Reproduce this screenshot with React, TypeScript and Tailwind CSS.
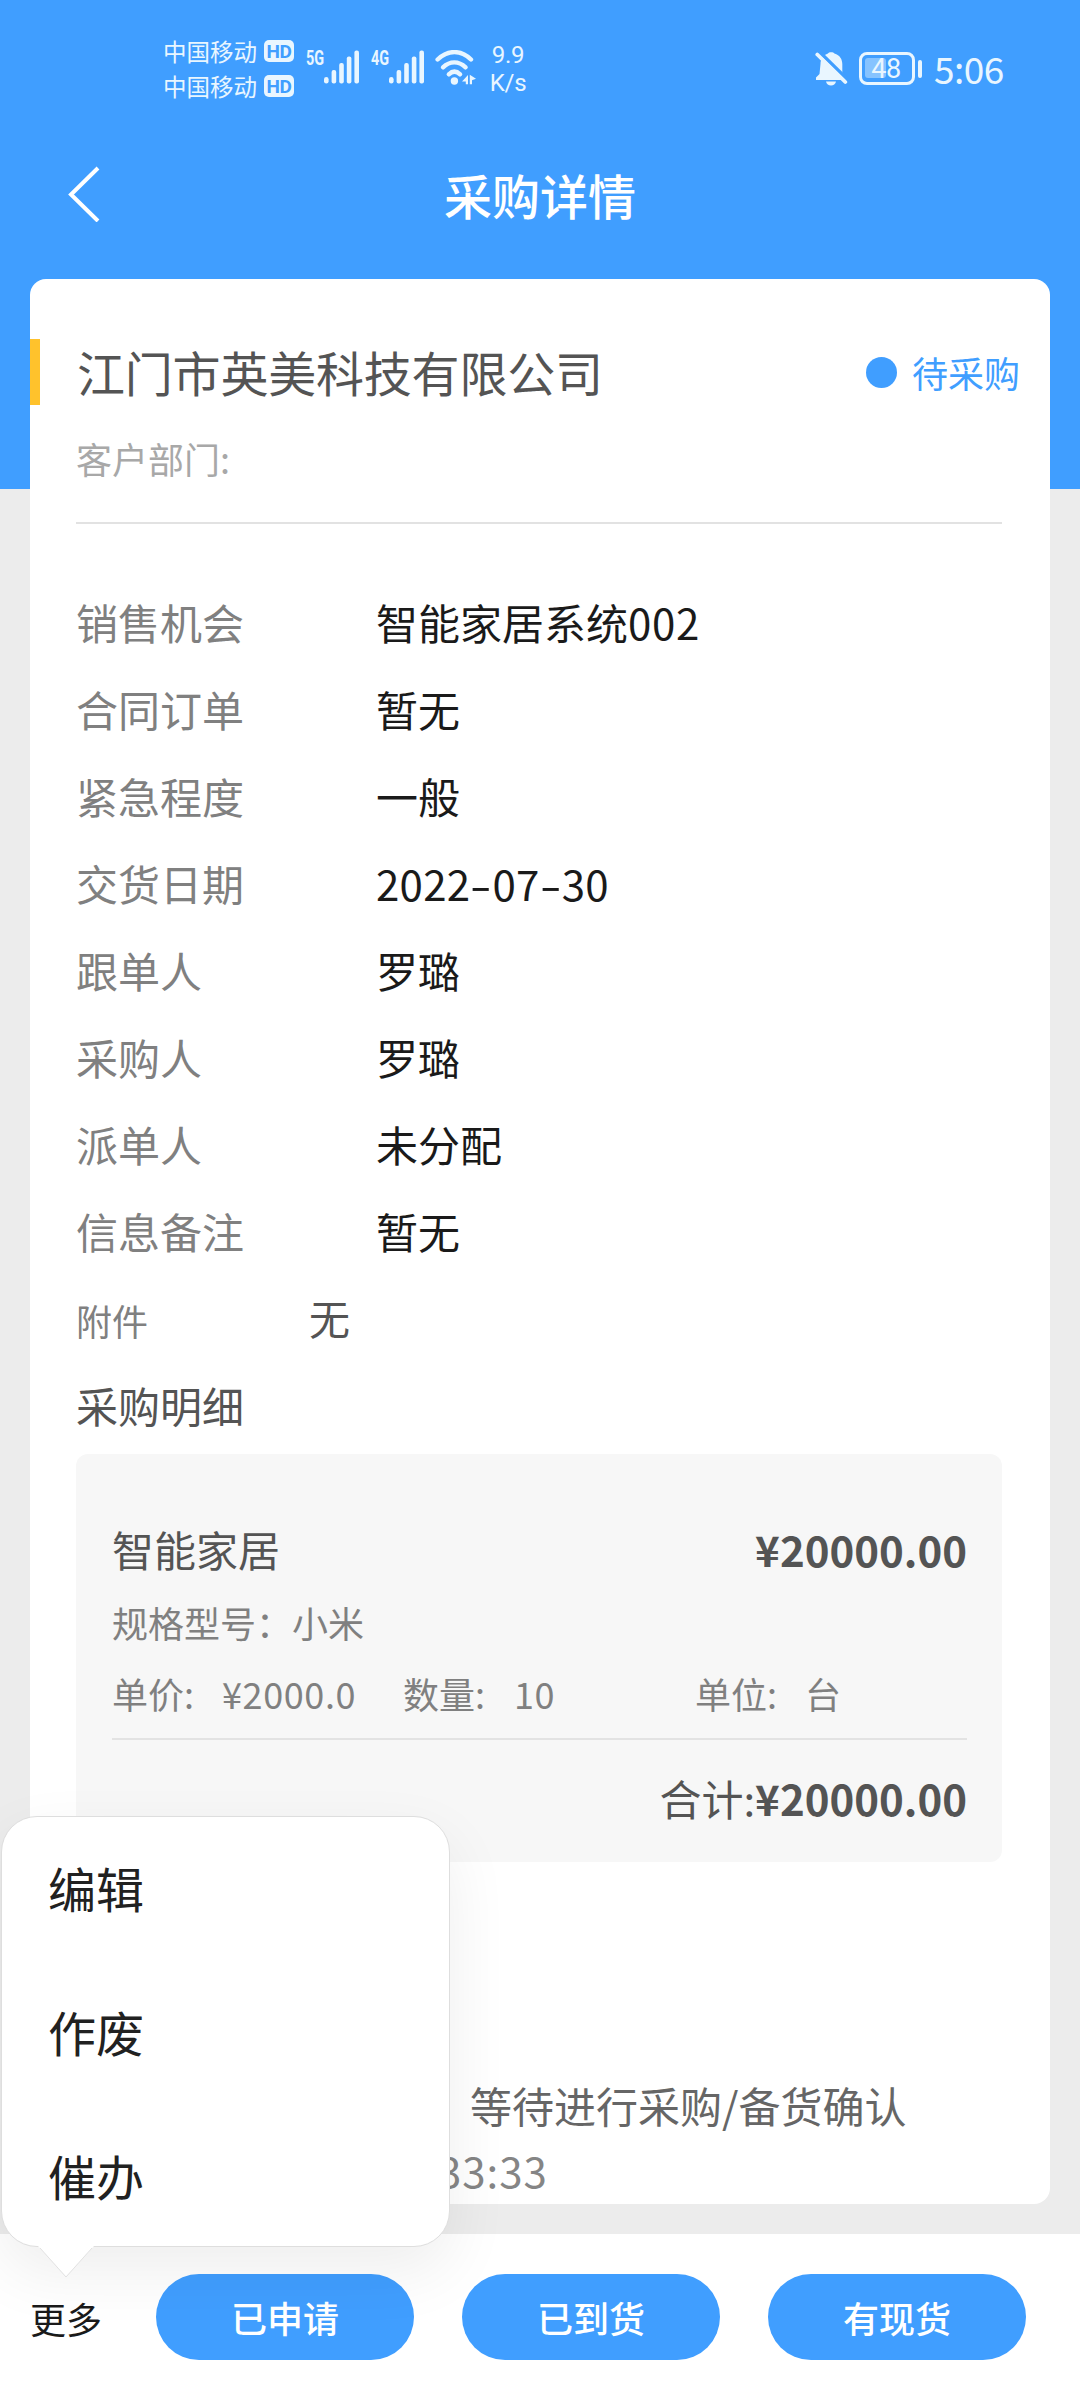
import React from "react";

const fields: { label: string; value: React.ReactNode }[] = [
  { label: "销售机会", value: <>智能家居系统<span className="tracking-[0.7px]">002</span></> },
  { label: "合同订单", value: "暂无" },
  { label: "紧急程度", value: "一般" },
  { label: "交货日期", value: <DateValue parts={["2022", "07", "30"]} /> },
  { label: "跟单人", value: "罗璐" },
  { label: "采购人", value: "罗璐" },
  { label: "派单人", value: "未分配" },
  { label: "信息备注", value: "暂无" },
];

function DateValue({ parts }: { parts: string[] }) {
  return (
    <span className="tracking-[0.3px]">
      {parts.map((part, i) => (
        <React.Fragment key={i}>
          {i > 0 && <span className="inline-block w-[22px] scale-x-[1.5] text-center">-</span>}
          {part}
        </React.Fragment>
      ))}
    </span>
  );
}

function Carrier() {
  return (
    <div className="flex h-[35px] items-center">
      <span className="w-[101px] text-[23.5px] leading-[35px]">中国移动</span>
      <span className="mt-[-1px] flex h-[22px] w-[30px] items-center justify-center rounded-[5px] bg-[#e9f6ff] font-['Roboto'] text-[19px] leading-none font-bold tracking-[-0.5px] text-[#409eff]">
        HD
      </span>
    </div>
  );
}

function Signal({ label }: { label: string }) {
  return (
    <div className="flex h-[34px] w-[54px]">
      <span className="h-[16px] w-[18px] origin-left scale-x-[0.72] font-['Roboto'] text-[20px] leading-[16px] font-bold whitespace-nowrap">
        {label}
      </span>
      <svg width="36" height="34" viewBox="0 0 36 34" fill="currentColor">
        <rect x="0" y="27" width="4.6" height="6.5" rx="2.3" />
        <rect x="7.6" y="20" width="4.6" height="13.5" rx="2" />
        <rect x="15.2" y="13" width="4.6" height="20.5" rx="2" />
        <rect x="22.8" y="6.5" width="4.6" height="27" rx="2" />
        <rect x="30.4" y="0.5" width="4.6" height="33" rx="2" />
      </svg>
    </div>
  );
}

function Wifi() {
  return (
    <svg width="42" height="36" viewBox="0 0 42 36" fill="none" stroke="currentColor" strokeWidth="4.4" strokeLinecap="round">
      <path d="M2.6 9.5C13 -.4 26 -.4 36 9.500" />
      <path d="M8 17.300c7-6.600 15.600-6.600 22.600 0" />
      <path d="M13.800 24.300c3.700-3.500 7.600-3.500 11.300 0" />
      <circle cx="19.400" cy="31" r="3.700" fill="currentColor" stroke="none" />
      <path d="M27 31.500l6-6.500v9.200h-2.200v-2.700zM34.800 24.800l6.200 4-4 1.500v4h-2.200z" fill="currentColor" stroke="none" />
    </svg>
  );
}

function MutedBell() {
  return (
    <svg width="33" height="36" viewBox="0 0 33 36">
      <path
        d="M5.500 13c0-5 3-9 7.500-10.500C13.600.8 18.600.8 19.400 2.500 25 4 27.300 8.500 27.300 13v8.500L31 26.500V29H1v-2.500l3.500-3.500z"
        fill="#e9f6ff"
      />
      <path d="M11 30.500h10c-.6 2.600-2.500 4-5 4s-4.400-1.400-5-4z" fill="#e9f6ff" />
      <path d="M3.500 0l29 28.500" stroke="#409eff" strokeWidth="3.500" />
      <path d="M2.300 3.500l28 27.500" stroke="#e9f6ff" strokeWidth="3.800" strokeLinecap="round" />
    </svg>
  );
}

function StatusBar() {
  return (
    <div className="flex h-[120px] items-start text-[#e9f6ff]">
      <div className="mt-[34px] ml-[163px] w-[131px]">
        <Carrier />
        <Carrier />
      </div>
      <div className="mt-[50px] ml-[12px] flex">
        <Signal label="5G" />
        <div className="ml-[11px]">
          <Signal label="4G" />
        </div>
        <div className="ml-[10px]">
          <Wifi />
        </div>
      </div>
      <div className="mt-[41px] ml-[10px] w-[42px] text-center font-['Roboto'] text-[24px] leading-[28px] tracking-[-0.3px]">
        <div>9.9</div>
        <div>K/s</div>
      </div>
      <div className="mt-[51px] ml-[286px]">
        <MutedBell />
      </div>
      <div className="mt-[52px] ml-[11px] flex items-center">
        <div className="relative flex h-[33px] w-[56px] items-center justify-center rounded-[8px] border-[3.5px] border-[#e9f6ff]">
          <div className="absolute top-[3px] left-[3px] h-[20px] w-[21px] rounded-[3px] bg-[#86c3ff]" />
          <span className="relative mt-[2px] mr-[2px] font-['Roboto'] text-[27px] leading-none tracking-[-0.5px]">48</span>
        </div>
        <div className="ml-[3px] h-[18px] w-[4px] rounded-full bg-[#e9f6ff]" />
      </div>
      <div className="mt-[50px] ml-[12px] font-['Noto_Sans_CJK_SC',sans-serif] text-[37px] leading-[36px] tracking-[-0.5px]">5:06</div>
    </div>
  );
}

function NavBar() {
  return (
    <div className="mb-[11px] grid h-[148px] grid-cols-[120px_1fr_120px] items-center text-white">
      <svg className="ml-[67px]" width="34" height="56" viewBox="0 0 34 56" fill="none" stroke="currentColor" strokeWidth="4">
        <path d="M31 2L4 28.500l27 26.500" />
      </svg>
      <h1 className="pb-[1px] text-center text-[48px] leading-[60px] font-medium">采购详情</h1>
    </div>
  );
}

function PurchaseItem() {
  return (
    <div className="mr-[48px] ml-[46px] mt-[8px] h-[408px] rounded-[12px] bg-[#f7f7f7] pr-[35px] pl-[36px] pt-[65px] text-[#545454]">
      <div className="flex h-[60px] items-center justify-between text-[42px] leading-[60px]">
        <span>智能家居</span>
        <span className="font-bold">¥20000.00</span>
      </div>
      <div className="mt-[18px] h-[50px] text-[36px] leading-[50px] text-[#808080]">规格型号：小米</div>
      <div className="mt-[21px] flex h-[50px] text-[36px] leading-[50px] text-[#808080]">
        <span className="w-[110px]">单价:</span>
        <span className="w-[181px] tracking-[0.6px]">¥2000.0</span>
        <span className="w-[111px]">数量:</span>
        <span className="w-[181px] tracking-[0.6px]">10</span>
        <span className="w-[110px]">单位:</span>
        <span>台</span>
      </div>
      <div className="mt-[20px] h-[2px] bg-[#e3e3e3]" />
      <div className="mt-[28px] text-right text-[42px] leading-[60px]">
        合计:<span className="font-bold">¥20000.00</span>
      </div>
    </div>
  );
}

function DetailCard() {
  return (
    <main className="mx-[30px] h-[1925px] shrink-0 rounded-[16px] bg-white pt-[60px]">
      <div className="flex h-[66px] items-center">
        <div className="h-[66px] w-[10px] bg-[#ffc22c]" />
        <h2 className="ml-[37px] flex-1 pb-[1px] text-[48px] leading-[63px] tracking-[-0.2px] text-[#545454]">江门市英美科技有限公司</h2>
        <span className="h-[31px] w-[31px] rounded-full bg-[#409eff]" />
        <span className="mr-[30px] ml-[15px] text-[36px] leading-[60px] text-[#409eff]">待采购</span>
      </div>
      <div className="mt-[29px] ml-[46px] h-[48px] text-[36px] leading-[48px] text-[#a8a8a8]">客户部门:</div>
      <div className="mr-[48px] ml-[46px] mt-[40px] h-[2px] bg-[#e2e2e2]" />
      <dl className="mt-[54px] ml-[46px]">
        {fields.map((field) => (
          <div key={field.label} className="flex h-[87px] items-center text-[42px] leading-[60px]">
            <dt className="w-[300px] text-[#808080]">{field.label}</dt>
            <dd className="text-[#1a1a1a]">{field.value}</dd>
          </div>
        ))}
      </dl>
      <div className="ml-[46px] flex h-[88px] items-center">
        <span className="w-[233px] pt-[4px] text-[36px] leading-[60px] text-[#808080]">附件</span>
        <span className="pb-[2px] text-[41px] leading-[60px] text-[#545454]">无</span>
      </div>
      <h3 className="ml-[46px] h-[84px] text-[42px] leading-[85px] text-[#545454]">采购明细</h3>
      <PurchaseItem />
      <div className="mt-[213px] ml-[440px] text-[42px] leading-[60px] text-[#666666]">等待进行采购/备货确认</div>
      <div className="mt-[10px] ml-[408px] text-[42px] leading-[50px] tracking-[1px] text-[#858585]">33:33</div>
    </main>
  );
}

function ActionBar() {
  return (
    <footer className="mt-[30px] flex h-[166px] shrink-0 items-start bg-white pt-[40px]">
      <span className="w-[156px] pl-[30px] text-[36px] leading-[88px] text-[#1a1a1a]">更多</span>
      <div className="flex gap-[48px]">
        {["已申请", "已到货", "有现货"].map((label) => (
          <button key={label} className="h-[86px] w-[258px] rounded-full bg-[#409eff] text-[36px] leading-[86px] font-medium text-white">
            {label}
          </button>
        ))}
      </div>
    </footer>
  );
}

function MoreMenu() {
  return (
    <div className="absolute top-[1816px] left-[1px] h-[431px] w-[449px] rounded-[36px] border border-[#dedede] bg-white pl-[46px] shadow-[0_24px_64px_rgba(0,0,0,0.07)]">
      {["编辑", "作废", "催办"].map((label) => (
        <div key={label} className="h-[144px] text-[48px] leading-[140px] text-[#212121]">
          {label}
        </div>
      ))}
      <svg className="absolute top-[429px] left-[36px]" width="56" height="32" viewBox="0 0 56 32">
        <path d="M0 0H56L28 31Z" fill="white" />
        <path d="M2 2L28 31L54 2" fill="none" stroke="#e2e2e2" strokeWidth="1" />
      </svg>
    </div>
  );
}

export default function App() {
  return (
    <div className="relative flex h-[2400px] w-[1080px] flex-col overflow-hidden bg-[linear-gradient(to_bottom,#409eff_489px,#ececec_489px)] font-['Noto_Sans_CJK_SC',sans-serif]">
      <StatusBar />
      <NavBar />
      <DetailCard />
      <ActionBar />
      <MoreMenu />
    </div>
  );
}
